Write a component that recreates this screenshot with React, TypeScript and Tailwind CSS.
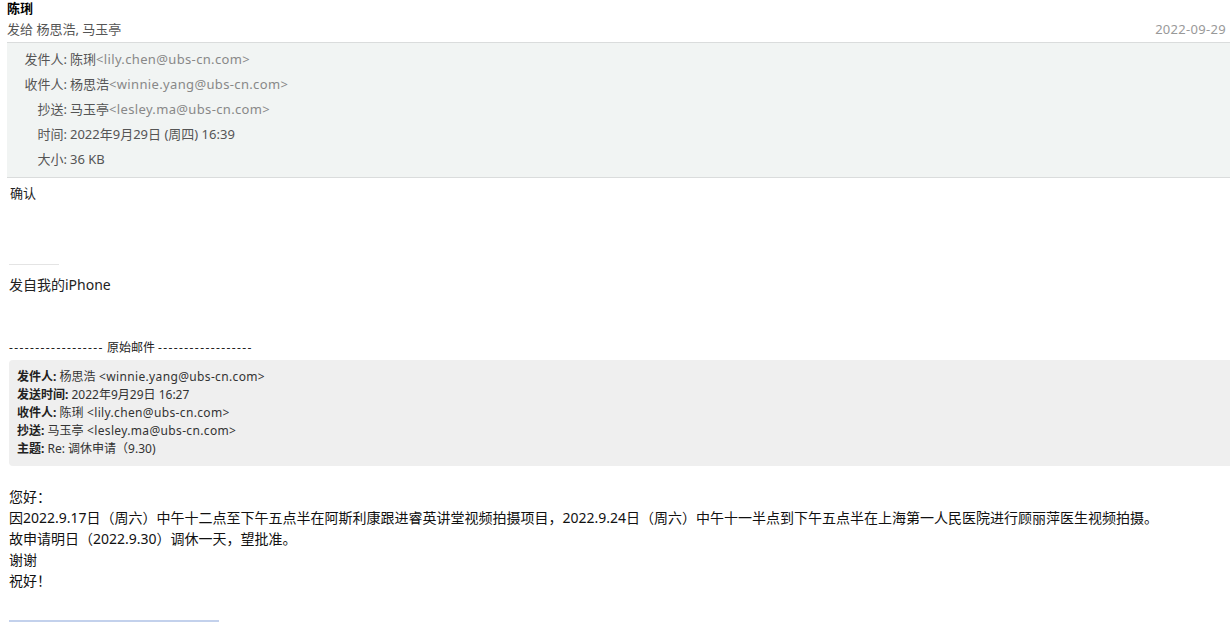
import React from "react";

const font = "font-['Noto_Sans','Noto_Sans_CJK_SC',sans-serif]";

function App() {
  const headerRows = [
    { label: "发件人:", name: "陈琍", email: "<lily.chen@ubs-cn.com>" },
    { label: "收件人:", name: "杨思浩", email: "<winnie.yang@ubs-cn.com>" },
    { label: "抄送:", name: "马玉亭", email: "<lesley.ma@ubs-cn.com>" },
    { label: "时间:", name: "2022年9月29日 (周四) 16:39", email: "" },
    { label: "大小:", name: "36 KB", email: "" },
  ];

  const origRows = [
    { label: "发件人:", name: "杨思浩", email: "<winnie.yang@ubs-cn.com>" },
    { label: "发送时间:", name: "2022年9月29日 16:27", email: "" },
    { label: "收件人:", name: "陈琍", email: "<lily.chen@ubs-cn.com>" },
    { label: "抄送:", name: "马玉亭", email: "<lesley.ma@ubs-cn.com>" },
    { label: "主题:", name: "Re: 调休申请（9.30)", email: "" },
  ];

  const body = [
    "您好：",
    "因2022.9.17日（周六）中午十二点至下午五点半在阿斯利康跟进睿英讲堂视频拍摄项目，2022.9.24日（周六）中午十一半点到下午五点半在上海第一人民医院进行顾丽萍医生视频拍摄。",
    "故申请明日（2022.9.30）调休一天，望批准。",
    "谢谢",
    "祝好！",
  ];

  return (
    <div className={`${font} w-full min-h-screen bg-white text-[#222]`}>
      <div className="pl-[7px] pr-[4px]">
        <div className="h-[17px] text-[13px] leading-[17px] font-bold text-black">
          陈琍
        </div>
        <div className="flex h-[25px] items-center justify-between text-[13px]">
          <span className="text-[#555]">发给 杨思浩, 马玉亭</span>
          <span className="tracking-[0.3px] text-[#999]">2022-09-29</span>
        </div>
      </div>

      <div className="ml-[7px] border-y border-[#dadcdc] bg-[#f1f4f3] pt-[4px] pb-[5px] text-[13px] leading-[25px]">
        {headerRows.map((row) => (
          <div key={row.label} className="flex">
            <span className="w-[60px] text-right text-[#555]">{row.label}</span>
            <span className="ml-[3px] text-[#555]">{row.name}</span>
            {row.email && <span className="tracking-[0.35px] text-[#888]">{row.email}</span>}
          </div>
        ))}
      </div>

      <div className="mt-[6px] pl-[10px] text-[13px] leading-[18px] text-[#222]">确认</div>

      <div className="ml-[9px] mt-[62px] h-px w-[50px] bg-[#e4e4e4]" />

      <div className="mt-[10px] pl-[9px] text-[14px] leading-[20px] text-[#222]">发自我的iPhone</div>

      <div className="mt-[44px] pl-[9px] text-[12px] leading-[18px] text-[#222]">
        <span className="tracking-[1.4px]">------------------</span> 原始邮件{" "}
        <span className="tracking-[1.4px]">------------------</span>
      </div>

      <div className="ml-[9px] mt-[3px] rounded-l-[4px] bg-[#efefef] px-[8px] py-[8px] text-[12px] leading-[18px] text-[#333]">
        {origRows.map((row) => (
          <div key={row.label}>
            <span className="font-bold text-[#222]">{row.label}</span> {row.name}
            {row.email && <span className="tracking-[0.35px]"> {row.email}</span>}
          </div>
        ))}
      </div>

      <div className="mt-[20px] pl-[9px] text-[14px] leading-[21px] text-[#111]">
        {body.map((line, i) => (
          <div key={i}>{line}</div>
        ))}
      </div>

      <div className="ml-[9px] mt-[29px] h-[2px] w-[210px] bg-[#c3d1ec]" />
    </div>
  );
}

export default App;
